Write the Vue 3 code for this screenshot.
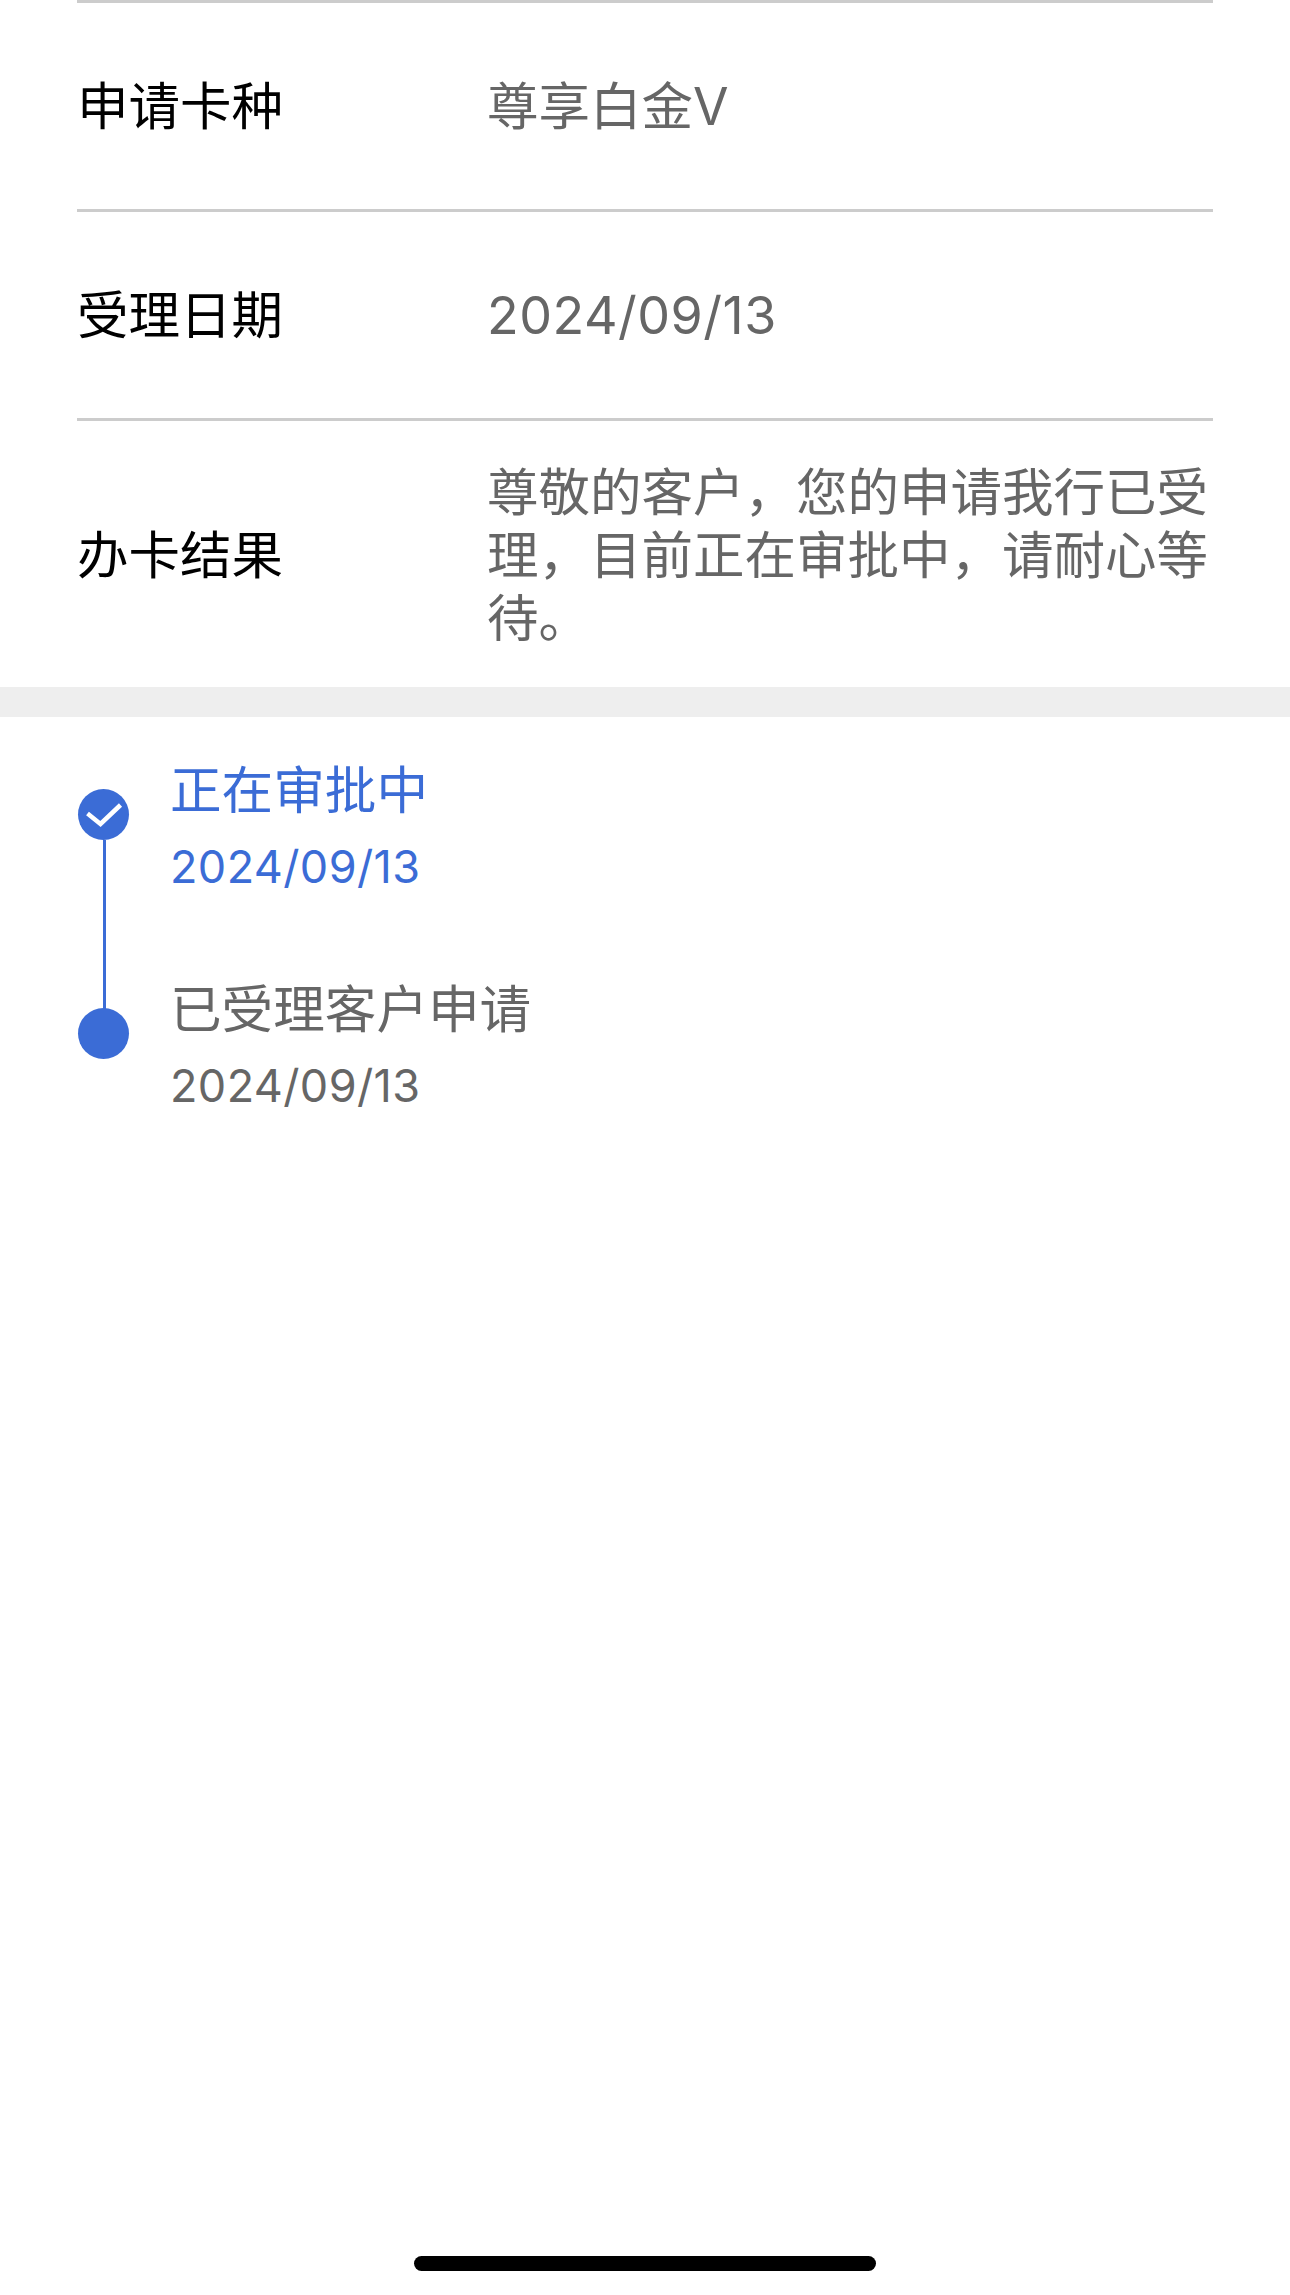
<template>
  <div class="page">
    <div class="info">
      <div v-for="row in rows" :key="row.label" class="info-row" :class="{ tall: row.tall }">
        <div class="info-label">{{ row.label }}</div>
        <div class="info-value" :class="{ date: row.date }">{{ row.value }}</div>
      </div>
    </div>
    <div class="band"></div>
    <div class="timeline">
      <div v-for="(step, i) in steps" :key="step.title" class="step" :class="{ active: step.active }">
        <div v-if="i < steps.length - 1" class="connector"></div>
        <div class="dot">
          <svg v-if="step.active" width="51" height="51" viewBox="0 0 51 51">
            <path d="M9.5 24.5 L22.5 35 L42.5 16" fill="none" stroke="#fff" stroke-width="4.5" />
          </svg>
        </div>
        <div class="step-text">
          <div class="step-title">{{ step.title }}</div>
          <div class="step-date">{{ step.date }}</div>
        </div>
      </div>
    </div>
    <div class="home-bar"></div>
  </div>
</template>

<script setup>
const rows = [
  { label: '申请卡种', value: '尊享白金V' },
  { label: '受理日期', value: '2024/09/13', date: true },
  { label: '办卡结果', value: '尊敬的客户，您的申请我行已受理，目前正在审批中，请耐心等待。', tall: true },
]

const steps = [
  { title: '正在审批中', date: '2024/09/13', active: true },
  { title: '已受理客户申请', date: '2024/09/13', active: false },
]
</script>

<style>
html,
body {
  margin: 0;
  background: #fff;
}
</style>

<style scoped>
.page {
  height: 2295px;
  display: flex;
  flex-direction: column;
  background: #fff;
  font-family: Inter, "Noto Sans CJK SC", sans-serif;
  overflow: hidden;
}

.info {
  padding: 0 77px;
}

.info-row {
  box-sizing: border-box;
  height: 209px;
  display: flex;
  align-items: center;
  border-top: 3px solid #ccc;
}

.info-row.tall {
  height: 269px;
  padding-top: 2px;
}

.info-label {
  width: 410px;
  flex: none;
  font-size: 51.5px;
  line-height: 63px;
  color: #000;
}

.info-value {
  flex: 1;
  font-size: 51.5px;
  line-height: 63px;
  color: #666;
}

.info-value.date {
  font-size: 52px;
  letter-spacing: 0.5px;
}

.band {
  height: 30px;
  background: #eee;
  flex: none;
}

.timeline {
  padding: 72px 0 0 78px;
}

.step {
  position: relative;
  height: 219px;
  display: flex;
}

.connector {
  position: absolute;
  left: 25px;
  top: 51px;
  width: 3px;
  height: 170px;
  background: #3b6cd6;
}

.dot {
  width: 51px;
  height: 51px;
  flex: none;
  border-radius: 50%;
  background: #3b6cd6;
}

.dot svg {
  display: block;
}

.step-text {
  margin: -30px 0 0 41px;
  color: #666;
}

.step.active .step-text {
  color: #3b6cd6;
}

.step-title {
  font-size: 51.6px;
  line-height: 63px;
}

.step-date {
  margin-top: 15px;
  font-size: 45px;
  line-height: 60px;
  letter-spacing: 0.4px;
}

.home-bar {
  width: 462px;
  height: 15px;
  margin: auto auto 24px;
  border-radius: 8px;
  background: #000;
}
</style>
